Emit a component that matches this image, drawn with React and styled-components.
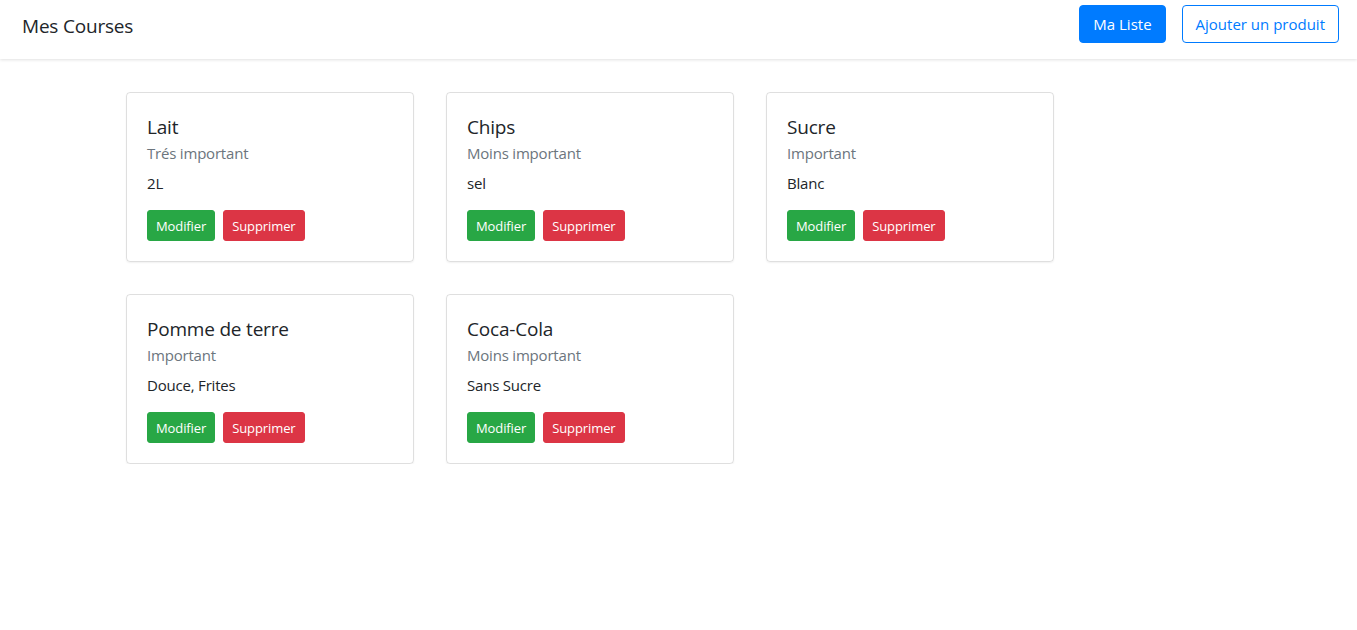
import React from "react";
import styled, { createGlobalStyle } from "styled-components";

const Global = createGlobalStyle`
  * { box-sizing: border-box; }
  body {
    margin: 0;
    font-family: "Open Sans", "Noto Sans", sans-serif;
    color: #212529;
    background: #fff;
  }
`;

const Nav = styled.nav`
  display: flex;
  align-items: flex-start;
  justify-content: space-between;
  height: 59px;
  padding: 5px 18px 0 22px;
  background: #fff;
  box-shadow: 0 1px 3px rgba(0, 0, 0, 0.12);
`;

const Brand = styled.div`
  font-size: 19px;
  line-height: 30px;
  margin-top: 6px;
  color: #212529;
  letter-spacing: -0.2px;
`;

const Actions = styled.div`
  display: flex;
  gap: 16px;
`;

const NavButton = styled.button`
  font-family: inherit;
  font-size: 15px;
  height: 38px;
  padding: 0 13px;
  border-radius: 4px;
  border: 1px solid #007bff;
  background: ${(p) => (p.$outline ? "#fff" : "#007bff")};
  color: ${(p) => (p.$outline ? "#007bff" : "#fff")};
`;

const Grid = styled.main`
  display: grid;
  grid-template-columns: repeat(3, 288px);
  gap: 32px;
  padding: 33px 0 0 126px;
`;

const Card = styled.div`
  border: 1px solid rgba(0, 0, 0, 0.125);
  border-radius: 4px;
  padding: 20px;
  box-shadow: 0 1px 2px rgba(0, 0, 0, 0.06);
`;

const Title = styled.h5`
  margin: 0 0 5px;
  padding-top: 2px;
  font-size: 19px;
  font-weight: 400;
  line-height: 24px;
  letter-spacing: -0.2px;
`;

const Subtitle = styled.h6`
  margin: 0 0 8px;
  font-size: 15px;
  font-weight: 400;
  line-height: 19px;
  color: #6c757d;
  letter-spacing: -0.2px;
`;

const Text = styled.p`
  margin: 0 0 15px;
  font-size: 15px;
  line-height: 24px;
  letter-spacing: -0.2px;
`;

const Buttons = styled.div`
  display: flex;
  gap: 8px;
`;

const SmallButton = styled.button`
  font-family: inherit;
  font-size: 13px;
  height: 31px;
  padding: 0 8px;
  border: 1px solid ${(p) => p.$color};
  border-radius: 3px;
  background: ${(p) => p.$color};
  color: #fff;
  letter-spacing: -0.1px;
`;

const items = [
  { name: "Lait", prio: "Trés important", desc: "2L" },
  { name: "Chips", prio: "Moins important", desc: "sel" },
  { name: "Sucre", prio: "Important", desc: "Blanc" },
  { name: "Pomme de terre", prio: "Important", desc: "Douce, Frites" },
  { name: "Coca-Cola", prio: "Moins important", desc: "Sans Sucre" },
];

export default function App() {
  return (
    <>
      <Global />
      <Nav>
        <Brand>Mes Courses</Brand>
        <Actions>
          <NavButton>Ma Liste</NavButton>
          <NavButton $outline>Ajouter un produit</NavButton>
        </Actions>
      </Nav>
      <Grid>
        {items.map((it) => (
          <Card key={it.name}>
            <Title>{it.name}</Title>
            <Subtitle>{it.prio}</Subtitle>
            <Text>{it.desc}</Text>
            <Buttons>
              <SmallButton $color="#28a745">Modifier</SmallButton>
              <SmallButton $color="#dc3545">Supprimer</SmallButton>
            </Buttons>
          </Card>
        ))}
      </Grid>
    </>
  );
}
